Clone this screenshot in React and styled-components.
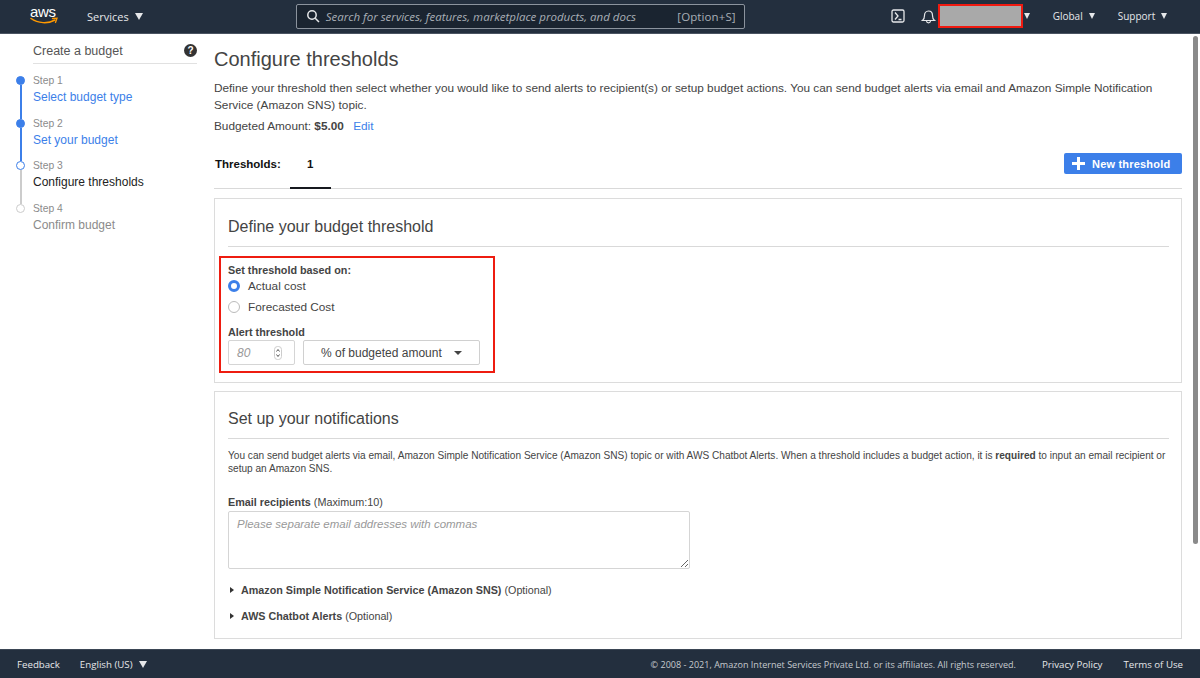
import React from 'react';
import styled, { createGlobalStyle } from 'styled-components';

const GlobalStyle = createGlobalStyle`
  html, body { margin: 0; padding: 0; height: 100%; overflow: hidden; }
  body { font-family: "Liberation Sans", Arial, sans-serif; color: #444; background: #fff; }
  * { box-sizing: border-box; }
`;

const Page = styled.div`
  height: 678px;
  display: flex;
  flex-direction: column;
  position: relative;
`;

const TopBar = styled.header`
  height: 34px;
  flex: none;
  background: #232f3e;
  border-bottom: 1px solid #4a5462;
  display: flex;
  align-items: center;
  padding: 0 0 1px 30px;
  color: #e6e8ea;
  font-family: "Open Sans", sans-serif;
  font-size: 11px;
`;

const Logo = styled.div`
  width: 29px;
  height: 24px;
  position: relative;
  margin-right: 28px;
  color: #fff;
  font-family: "Liberation Sans", sans-serif;
  font-size: 15px;
  line-height: 15px;
  letter-spacing: -0.3px;
  svg { position: absolute; left: 0; top: 13px; }
`;

const NavItem = styled.div`
  display: flex;
  align-items: center;
  gap: 6px;
  margin-left: ${p => p.$ml || 0}px;
  font-size: ${p => p.$fs || 'inherit'};
  white-space: nowrap;
`;

const Caret = styled.span`
  width: 0;
  height: 0;
  border-left: ${p => (p.$small ? 3.5 : 4.5)}px solid transparent;
  border-right: ${p => (p.$small ? 3.5 : 4.5)}px solid transparent;
  border-top: ${p => (p.$small ? 6 : 7)}px solid ${p => p.$color || '#e6e8ea'};
  display: inline-block;
`;

const SelectCaret = styled.span`
  width: 0;
  height: 0;
  border-left: 4.5px solid transparent;
  border-right: 4.5px solid transparent;
  border-top: 4.5px solid #444;
  display: inline-block;
`;

const Search = styled.div`
  width: 449px;
  height: 25px;
  margin-left: 153px;
  border: 1px solid #8b939d;
  border-radius: 2px;
  background: #1a2430;
  display: flex;
  align-items: center;
  padding: 0 8px 0 9px;
  gap: 6px;
  color: #a9afb6;
  em { font-size: 11.5px; flex: 1; white-space: nowrap; }
  span { font-size: 11.5px; letter-spacing: 0.1px; }
`;

const Masked = styled.div`
  width: 85px;
  height: 24px;
  margin-left: 2px;
  background: #a9a9a9;
  border: 2px solid #f01a10;
`;

const Body = styled.div`
  flex: 1;
  display: flex;
  min-height: 0;
`;

const Side = styled.aside`
  width: 214px;
  flex: none;
  padding: 8px 17px 0 16px;
`;

const SideHead = styled.div`
  margin-left: 17px;
  height: 22px;
  padding-bottom: 4px;
  border-bottom: 1px solid #e1e1e1;
  display: flex;
  align-items: center;
  justify-content: space-between;
  font-size: 12.5px;
  color: #555;
  margin-bottom: 10px;
`;

const Step = styled.div`
  display: flex;
  gap: 8px;
  height: 42.5px;
`;

const Rail = styled.div`
  width: 9px;
  flex: none;
  display: flex;
  flex-direction: column;
  align-items: center;
  padding-top: 2px;
`;

const Dot = styled.span`
  width: 9px;
  height: 9px;
  flex: none;
  border-radius: 50%;
  background: ${p => (p.$state === 'done' ? '#3c7fe9' : '#fff')};
  border: 1.5px solid ${p => (p.$state === 'todo' ? '#ccc' : '#3c7fe9')};
`;

const Line = styled.span`
  width: 2px;
  flex: 1;
  margin-bottom: -2px;
  background: ${p => (p.$done ? '#3c7fe9' : '#ccc')};
`;

const StepText = styled.div`
  padding-top: 1px;
`;

const StepLabel = styled.div`
  font-size: 10.3px;
  line-height: 12px;
  color: #8b8b8b;
`;

const StepName = styled.div`
  font-size: 12px;
  line-height: 14px;
  margin-top: 3px;
  color: ${p => (p.$state === 'done' ? '#3c7fe9' : p.$state === 'current' ? '#222' : '#8b8b8b')};
`;

const Main = styled.main`
  flex: 1;
  padding: 13px 18px 0 0;
  min-width: 0;
  overflow: hidden;
`;

const Title = styled.h1`
  margin: 0 0 9px;
  font-size: 20px;
  line-height: 24px;
  font-weight: 400;
  color: #444;
`;

const Intro = styled.p`
  margin: 0 0 4px;
  font-size: 11.8px;
  line-height: 17px;
  color: #444;
`;

const Amount = styled.div`
  font-size: 11.8px;
  line-height: 17px;
  a { color: #3c7fe9; margin-left: 6px; }
`;

const TabRow = styled.div`
  height: 50px;
  margin-top: 4px;
  border-bottom: 1px solid #d9d9d9;
  display: flex;
  align-items: center;
  justify-content: space-between;
`;

const Tab = styled.div`
  display: flex;
  align-items: center;
  height: 100%;
  padding: 1px 0 0 1px;
  font-size: 11.5px;
  font-weight: 700;
  color: #111;
`;

const TabCount = styled.div`
  height: calc(100% + 1px);
  width: 41px;
  margin-left: 9px;
  padding-top: 1px;
  display: flex;
  align-items: center;
  justify-content: center;
  border-bottom: 2px solid #16191f;
`;

const Button = styled.button`
  width: 118px;
  height: 21px;
  border: 0;
  border-radius: 2px;
  background: #3c7fe9;
  color: #fff;
  font: 700 11px "Liberation Sans", sans-serif;
  letter-spacing: 0.2px;
  display: flex;
  align-items: center;
  gap: 7px;
  padding: 0 0 0 8px;
`;

const Panel = styled.section`
  height: ${p => p.$h}px;
  margin-top: ${p => p.$mt}px;
  border: 1px solid #dcdcdc;
  padding: 0 12px 0 13px;
`;

const PanelTitle = styled.h2`
  margin: 0;
  height: ${p => p.$h || 47}px;
  padding-top: ${p => (p.$h ? 17 : 16)}px;
  font-size: 16px;
  line-height: 22px;
  font-weight: 400;
  color: #444;
  border-bottom: 1px solid #d9d9d9;
`;

const Highlight = styled.div`
  width: 276px;
  height: 117px;
  margin: 9px 0 0 -9px;
  border: 2px solid #ee1c10;
  padding: 7px 0 0 7px;
`;

const FieldLabel = styled.div`
  font-size: 10.8px;
  line-height: 11px;
  margin-bottom: -1px;
  font-weight: 700;
  color: #444;
  span { font-weight: 400; }
`;

const AlertLabel = styled(FieldLabel)`
  margin-top: 10px;
`;

const RadioRow = styled.label`
  display: flex;
  align-items: center;
  gap: 8px;
  height: 21px;
  font-size: 11.8px;
  color: #444;
`;

const Radio = styled.span`
  width: 12px;
  height: 12px;
  border-radius: 50%;
  flex: none;
  background: #fff;
  border: ${p => (p.$on ? '3.5px solid #3c7fe9' : '1px solid #bbb')};
`;

const Controls = styled.div`
  display: flex;
  gap: 8px;
  margin-top: 3px;
`;

const NumberBox = styled.div`
  width: 67px;
  height: 25px;
  border: 1px solid #d5d5d5;
  border-radius: 2px;
  display: flex;
  align-items: center;
  justify-content: space-between;
  padding: 0 12px 0 8px;
  font-size: 12px;
  font-style: italic;
  color: #999;
`;

const Select = styled.div`
  width: 177px;
  height: 25px;
  border: 1px solid #d0d0d0;
  border-radius: 2px;
  display: flex;
  align-items: center;
  padding-left: 17px;
  gap: 12px;
  font-size: 12px;
  color: #444;
`;

const HelpText = styled.p`
  margin: 10px 0 0;
  font-size: 10.1px;
  line-height: 13px;
  color: #444;
  b { font-weight: 700; }
`;

const EmailLabel = styled(FieldLabel)`
  line-height: 13px;
  margin: 21px 0 0;
`;

const Recipients = styled.textarea`
  display: block;
  width: 462px;
  height: 58px;
  margin-top: 2px;
  padding: 5px 8px;
  border: 1px solid #d5d5d5;
  border-radius: 2px;
  font: italic 11.5px/14px "Liberation Sans", sans-serif;
  &::placeholder { color: #999; opacity: 1; }
`;

const Disclosure = styled.div`
  display: flex;
  align-items: center;
  gap: 7px;
  height: 26px;
  font-size: 10.75px;
  font-weight: 700;
  color: #444;
  padding-left: 2px;
  margin-top: ${p => p.$mt || 0}px;
  span { font-weight: 400; }
  &::before {
    content: '';
    width: 0;
    height: 0;
    border-top: 3.5px solid transparent;
    border-bottom: 3.5px solid transparent;
    border-left: 4.5px solid #333;
  }
`;

const Scrollbar = styled.div`
  position: absolute;
  right: 2px;
  top: 36px;
  width: 5px;
  height: 508px;
  border-radius: 3px;
  background: #8a8a8a;
`;

const Footer = styled.footer`
  height: 29px;
  flex: none;
  background: #232f3e;
  border-top: 1px solid #3b4655;
  display: flex;
  align-items: center;
  padding: 0 17px 0 17px;
  color: #e6e8ea;
  font-family: "Open Sans", sans-serif;
  font-size: 9.7px;
`;

const Copyright = styled.div`
  margin-left: auto;
  font-size: 9.05px;
  color: #c6cacf;
`;

const steps = [
  ['Step 1', 'Select budget type', 'done', true],
  ['Step 2', 'Set your budget', 'done', true],
  ['Step 3', 'Configure thresholds', 'current', false],
  ['Step 4', 'Confirm budget', 'todo', null],
];

export default function App() {
  return (
    <Page>
      <GlobalStyle />
      <TopBar>
        <Logo>
          aws
          <svg width="29" height="9" viewBox="0 0 29 9" fill="none">
            <path d="M1 1.5C8 6.5 18 7 25 3" stroke="#f90" strokeWidth="1.5" strokeLinecap="round" />
            <path d="M22.5 1.5L27 1.2 25.5 5.5" stroke="#f90" strokeWidth="1.3" strokeLinecap="round" />
          </svg>
        </Logo>
        <NavItem>Services <Caret /></NavItem>
        <Search>
          <svg width="14" height="14" viewBox="0 0 14 14" fill="none" stroke="#e6e8ea" strokeWidth="1.5">
            <circle cx="6" cy="6" r="4.2" />
            <path d="M9.2 9.2L13 13" />
          </svg>
          <em>Search for services, features, marketplace products, and docs</em>
          <span>[Option+S]</span>
        </Search>
        <svg style={{ marginLeft: 146 }} width="14" height="14" viewBox="0 0 14 14" fill="none" stroke="#e6e8ea" strokeWidth="1.3">
          <rect x="1" y="1" width="12" height="12" rx="1.5" />
          <path d="M4 3.5L7 7 4 10.5M7.5 10.5H10.5" />
        </svg>
        <svg style={{ marginLeft: 16 }} width="15" height="15" viewBox="0 0 15 15" fill="none" stroke="#e6e8ea" strokeWidth="1.2">
          <path d="M1.5 11.5C3.5 10 3.5 8.5 3.5 6.5 3.5 4 5 2 7.5 2S11.5 4 11.5 6.5C11.5 8.5 11.5 10 13.5 11.5Z" />
          <path d="M5.5 12C5.8 14.5 9.2 14.5 9.5 12" />
        </svg>
        <Masked />
        <NavItem $ml={1}><Caret $small /></NavItem>
        <NavItem $ml={23} $fs="10px">Global <Caret $small /></NavItem>
        <NavItem $ml={23} $fs="10px">Support <Caret $small /></NavItem>
      </TopBar>
      <Body>
        <Side>
          <SideHead>
            Create a budget
            <svg width="13" height="13" viewBox="0 0 13 13">
              <circle cx="6.5" cy="6.5" r="6.5" fill="#333" />
              <text x="6.5" y="10" textAnchor="middle" fontSize="10" fontWeight="700" fill="#fff" fontFamily="Liberation Sans">?</text>
            </svg>
          </SideHead>
          {steps.map(([label, name, state, done]) => (
            <Step key={label}>
              <Rail>
                <Dot $state={state} />
                {done !== null && <Line $done={done} />}
              </Rail>
              <StepText>
                <StepLabel>{label}</StepLabel>
                <StepName $state={state}>{name}</StepName>
              </StepText>
            </Step>
          ))}
        </Side>
        <Main>
          <Title>Configure thresholds</Title>
          <Intro>
            Define your threshold then select whether you would like to send alerts to recipient(s) or setup budget actions. You can send budget alerts via email and Amazon Simple Notification Service (Amazon SNS) topic.
          </Intro>
          <Amount>Budgeted Amount: <b>$5.00</b> <a>Edit</a></Amount>
          <TabRow>
            <Tab>
              Thresholds:
              <TabCount>1</TabCount>
            </Tab>
            <Button>
              <svg width="13" height="13" viewBox="0 0 13 13" fill="#fff">
                <path d="M5 0h3v5h5v3H8v5H5V8H0V5h5z" />
              </svg>
              New threshold
            </Button>
          </TabRow>
          <Panel $h={185} $mt={9}>
            <PanelTitle $h={48}>Define your budget threshold</PanelTitle>
            <Highlight>
              <FieldLabel>Set threshold based on:</FieldLabel>
              <RadioRow><Radio $on />Actual cost</RadioRow>
              <RadioRow><Radio />Forecasted Cost</RadioRow>
              <AlertLabel>Alert threshold</AlertLabel>
              <Controls>
                <NumberBox>
                  80
                  <svg width="8" height="14" viewBox="0 0 8 14" fill="none" stroke="#555">
                    <rect x="0.5" y="0.5" width="7" height="13" rx="3" stroke="#ccc" />
                    <path d="M2.5 5.5L4 3.5 5.5 5.5M2.5 8.5L4 10.5 5.5 8.5" />
                  </svg>
                </NumberBox>
                <Select>
                  % of budgeted amount
                  <SelectCaret />
                </Select>
              </Controls>
            </Highlight>
          </Panel>
          <Panel $h={248} $mt={8}>
            <PanelTitle>Set up your notifications</PanelTitle>
            <HelpText>
              You can send budget alerts via email, Amazon Simple Notification Service (Amazon SNS) topic or with AWS Chatbot Alerts. When a threshold includes a budget action, it is <b>required</b> to input an email recipient or setup an Amazon SNS.
            </HelpText>
            <EmailLabel>Email recipients <span>(Maximum:10)</span></EmailLabel>
            <Recipients placeholder="Please separate email addresses with commas" />
            <Disclosure $mt={8}><div>Amazon Simple Notification Service (Amazon SNS) <span>(Optional)</span></div></Disclosure>
            <Disclosure><div>AWS Chatbot Alerts <span>(Optional)</span></div></Disclosure>
          </Panel>
        </Main>
      </Body>
      <Footer>
        Feedback
        <NavItem $ml={20}>English (US) <Caret /></NavItem>
        <Copyright>© 2008 - 2021, Amazon Internet Services Private Ltd. or its affiliates. All rights reserved.</Copyright>
        <NavItem $ml={26}>Privacy Policy</NavItem>
        <NavItem $ml={21}>Terms of Use</NavItem>
      </Footer>
      <Scrollbar />
    </Page>
  );
}
